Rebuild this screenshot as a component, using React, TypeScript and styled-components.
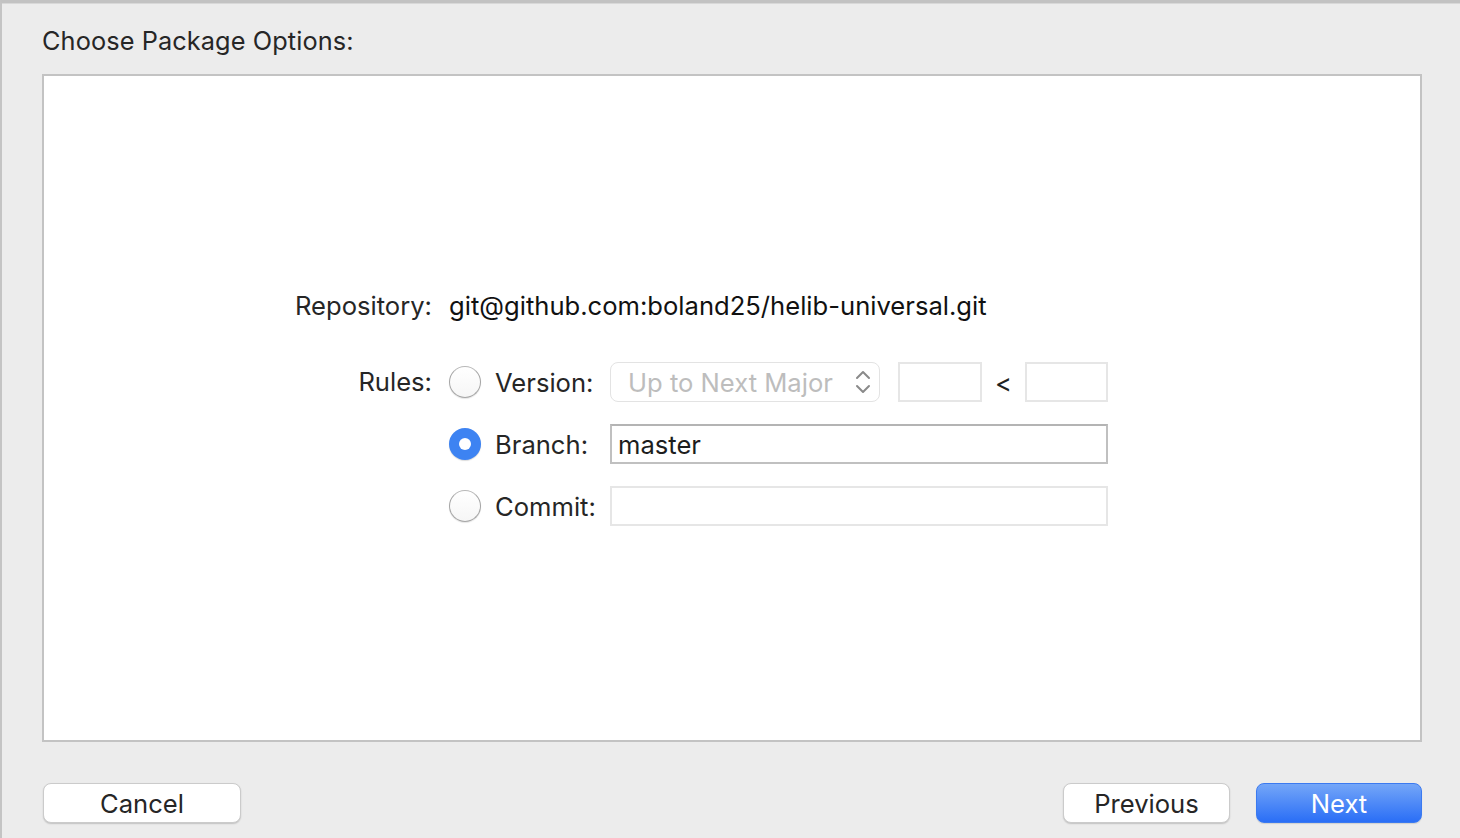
import React from "react";
import styled, { createGlobalStyle } from "styled-components";

const Global = createGlobalStyle`
  html, body { margin: 0; padding: 0; }
  body {
    width: 1460px; height: 838px; overflow: hidden;
    background: #ececec;
    font-family: Inter, "Noto Sans", "Liberation Sans", sans-serif;
    -webkit-font-smoothing: antialiased;
  }
`;

const Window = styled.div`
  box-sizing: border-box;
  width: 1460px;
  height: 838px;
  background: #ececec;
  border-top: 3px solid #c2c2c2;
  border-left: 2px solid #c4c4c4;
  box-shadow: inset 0 1px 0 #d8d8d8;
  display: flex;
  flex-direction: column;
  padding: 0 38px 0 40px;
`;

const Title = styled.h1`
  margin: 0;
  height: 71px;
  box-sizing: border-box;
  padding-top: 23px;
  font-size: 25.3px;
  font-weight: 400;
  line-height: 30px;
  color: #262626;
  letter-spacing: 0.1px;
`;

const Panel = styled.div`
  box-sizing: border-box;
  height: 668px;
  background: #ffffff;
  border: 2px solid #c3c3c3;
  padding: 210px 0 0 200px;
`;

const Form = styled.div`
  display: grid;
  grid-template-columns: 205px 32px 129px 498px;
  grid-template-rows: 54px 40px 40px 40px;
  row-gap: 22px;
  align-items: center;
  font-size: 25.6px;
`;

const FieldLabel = styled.div<{ $top?: boolean }>`
  grid-column: 1;
  text-align: right;
  padding-right: 17px;
  color: #262626;
  line-height: 40px;
  align-self: ${(p) => (p.$top ? "start" : "center")};
`;

const RepoValue = styled.div`
  grid-column: 2 / span 3;
  color: #111;
  white-space: nowrap;
  line-height: 40px;
  align-self: start;
`;

const Radio = styled.span<{ $on?: boolean }>`
  grid-column: 2;
  box-sizing: border-box;
  width: 32px;
  height: 32px;
  border-radius: 50%;
  display: flex;
  align-items: center;
  justify-content: center;
  ${(p) =>
    p.$on
      ? `background: #3d83f2; box-shadow: 0 1px 1px rgba(0,0,0,0.15);`
      : `background: linear-gradient(#ffffff, #f6f6f6); border: 1.5px solid #a6a6a6; border-top-color: #b8b8b8; box-shadow: 0 1px 1px rgba(0,0,0,0.1);`}
  &::after {
    content: "";
    display: ${(p) => (p.$on ? "block" : "none")};
    width: 12px;
    height: 12px;
    border-radius: 50%;
    background: #fff;
  }
`;

const OptionLabel = styled.div`
  grid-column: 3;
  padding-left: 14px;
  color: #262626;
`;

const ControlRow = styled.div`
  grid-column: 4;
  display: flex;
  align-items: center;
  height: 40px;
`;

const Popup = styled.div`
  box-sizing: border-box;
  width: 270px;
  height: 40px;
  border: 1.5px solid #e3e3e3;
  border-radius: 8px;
  display: flex;
  align-items: center;
  justify-content: space-between;
  padding: 0 7px 0 17px;
  color: #bdbdbd;
  background: #fff;
`;

const SmallField = styled.div<{ $w: number; $lead?: number }>`
  box-sizing: border-box;
  width: ${(p) => p.$w}px;
  height: 40px;
  margin-left: ${(p) => p.$lead ?? 0}px;
  border: 2px solid #e6e6e6;
`;

const Less = styled.span`
  width: 43px;
  text-align: center;
  color: #222;
`;

const TextField = styled.div<{ $disabled?: boolean }>`
  box-sizing: border-box;
  width: 498px;
  height: 40px;
  border: 2px solid ${(p) => (p.$disabled ? "#e6e6e6" : "#c0c0c0")};
  border-top-color: ${(p) => (p.$disabled ? "#e6e6e6" : "#b4b4b4")};
  display: flex;
  align-items: center;
  padding-left: 6px;
  color: #1d1d1d;
  background: #fff;
`;

const Footer = styled.div`
  flex: 1;
  display: flex;
  align-items: center;
  padding-top: 26px;
  padding-left: 1px;
`;

const Spacer = styled.div`
  flex: 1;
`;

const Button = styled.button<{ $w: number; $primary?: boolean }>`
  box-sizing: border-box;
  width: ${(p) => p.$w}px;
  height: 40px;
  margin-left: ${(p) => (p.$primary ? "26px" : "0")};
  border-radius: 8px;
  font-family: inherit;
  font-size: 25.6px;
  padding: 0;
  ${(p) =>
    p.$primary
      ? `background: linear-gradient(#74a6f8, #2a6ef6); color: #fff; border: 1px solid #3b7af0; box-shadow: 0 1px 1px rgba(0,0,0,0.12);`
      : `background: #fff; color: #262626; border: 1px solid #cbcbcb; box-shadow: 0 1px 1.5px rgba(0,0,0,0.18);`}
`;

const Chevrons = () => (
  <svg width="18" height="28" viewBox="0 0 18 28">
    <path d="M3 10 L9 4 L15 10" fill="none" stroke="#8a8a8a" strokeWidth="2" strokeLinecap="round" strokeLinejoin="round" />
    <path d="M3 18 L9 24 L15 18" fill="none" stroke="#8a8a8a" strokeWidth="2" strokeLinecap="round" strokeLinejoin="round" />
  </svg>
);

export default function App() {
  return (
    <>
      <Global />
      <Window>
        <Title>Choose Package Options:</Title>
        <Panel>
          <Form>
            <FieldLabel $top>Repository:</FieldLabel>
            <RepoValue>git@github.com:boland25/helib-universal.git</RepoValue>

            <FieldLabel>Rules:</FieldLabel>
            <Radio />
            <OptionLabel>Version:</OptionLabel>
            <ControlRow>
              <Popup>
                <span>Up to Next Major</span>
                <Chevrons />
              </Popup>
              <SmallField $w={84} $lead={18} />
              <Less>&lt;</Less>
              <SmallField $w={83} />
            </ControlRow>

            <Radio $on />
            <OptionLabel>Branch:</OptionLabel>
            <ControlRow>
              <TextField>master</TextField>
            </ControlRow>

            <Radio />
            <OptionLabel>Commit:</OptionLabel>
            <ControlRow>
              <TextField $disabled />
            </ControlRow>
          </Form>
        </Panel>
        <Footer>
          <Button $w={198}>Cancel</Button>
          <Spacer />
          <Button $w={167}>Previous</Button>
          <Button $w={166} $primary>Next</Button>
        </Footer>
      </Window>
    </>
  );
}
